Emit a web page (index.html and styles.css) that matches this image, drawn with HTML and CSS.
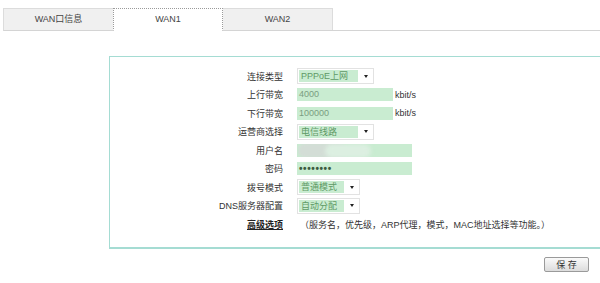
FILE: index.html
```html
<!DOCTYPE html>
<html>
<head>
  <title>WAN设置</title>
  <link rel="stylesheet" href="styles.css">
</head>
<body>
  <div class="page">
    <div class="tabs">
      <div class="tab">WAN口信息</div>
      <div class="tab active">WAN1</div>
      <div class="tab">WAN2</div>
      <div class="tab-line"></div>
    </div>

    <div class="panel">
      <div class="form">
        <div class="label">连接类型</div>
        <div class="field">
          <div class="select wide"><span class="sel-text">PPPoE上网</span><span class="arrow"></span></div>
        </div>

        <div class="label">上行带宽</div>
        <div class="field">
          <div class="input">4000</div><span class="unit">kbit/s</span>
        </div>

        <div class="label">下行带宽</div>
        <div class="field">
          <div class="input">100000</div><span class="unit">kbit/s</span>
        </div>

        <div class="label">运营商选择</div>
        <div class="field">
          <div class="select wide"><span class="sel-text">电信线路</span><span class="arrow"></span></div>
        </div>

        <div class="label">用户名</div>
        <div class="field">
          <div class="input long"><span class="blur-1"></span><span class="blur-2"></span></div>
        </div>

        <div class="label">密码</div>
        <div class="field">
          <div class="input long password">&bull;&bull;&bull;&bull;&bull;&bull;&bull;&bull;</div>
        </div>

        <div class="label">拨号模式</div>
        <div class="field">
          <div class="select"><span class="sel-text">普通模式</span><span class="arrow"></span></div>
        </div>

        <div class="label">DNS服务器配置</div>
        <div class="field">
          <div class="select"><span class="sel-text">自动分配</span><span class="arrow"></span></div>
        </div>

        <div class="label"><a class="adv-link" href="#">高级选项</a></div>
        <div class="field">
          <span class="adv-desc">（服务名，优先级，ARP代理，模式，MAC地址选择等功能。）</span>
        </div>
      </div>
    </div>

    <div class="actions">
      <button class="btn-save">保 存</button>
    </div>
  </div>
</body>
</html>
```

FILE: styles.css
```css
body {
  margin: 0;
  font-family: "Liberation Sans", "Noto Sans CJK SC", sans-serif;
  font-size: 9px;
  color: #333;
  background: #fff;
}

.page {
  width: 600px;
  height: 283px;
  overflow: hidden;
}

.tabs {
  display: flex;
  padding: 8px 0 0 3px;
}

.tab {
  width: 109px;
  height: 21px;
  line-height: 21px;
  text-align: center;
  background: #f0f0f0;
  border: 1px solid #dcdcdc;
  border-bottom: 1px solid #d4d4d4;
  box-sizing: content-box;
  margin-right: -1px;
  color: #444;
}

.tab.active {
  width: 108px;
  background: #fff;
  border: 1px dotted #9a9a9a;
  border-bottom: 1px solid #fff;
  position: relative;
  z-index: 1;
}

.tab-line {
  flex: 1;
  border-bottom: 1px solid #d4d4d4;
}

.panel {
  margin: 25px 0 0 109px;
  width: 520px;
  border: 1px solid #a5dcd3;
  border-bottom: 2px solid #a5dcd3;
  padding: 10px 0 13px;
}

.form {
  display: grid;
  grid-template-columns: 173px auto;
  grid-auto-rows: 18.5px;
  column-gap: 14px;
  align-items: center;
}

.label {
  text-align: right;
  color: #333;
}

.field {
  display: flex;
  align-items: center;
}

.select {
  display: flex;
  align-items: center;
  width: 59px;
  height: 14px;
  border: 1px solid #e2e2e2;
  padding: 0 1px;
}

.select.wide {
  width: 73px;
}

.sel-text {
  flex: 1;
  height: 12px;
  line-height: 12px;
  background: #c9ecd1;
  color: #5f9a66;
  padding-left: 2px;
  margin-right: 6px;
}

.arrow {
  width: 0;
  height: 0;
  border-left: 2.5px solid transparent;
  border-right: 2.5px solid transparent;
  border-top: 3px solid #222;
  margin-right: 4px;
}

.input {
  width: 94px;
  height: 13px;
  line-height: 13px;
  background: #c9ecd1;
  color: #7a9c80;
  padding-left: 2px;
  position: relative;
  overflow: hidden;
}

.input.long {
  width: 113px;
}

.input.password {
  color: #3b5a40;
  font-size: 10px;
  font-weight: bold;
  letter-spacing: 0.6px;
}

.blur-1 {
  position: absolute;
  left: 1px;
  top: -1px;
  width: 48px;
  height: 15px;
  background: #d3ddd6;
  border-radius: 7px;
  filter: blur(1.5px);
}

.blur-2 {
  position: absolute;
  left: 28px;
  top: 0;
  width: 46px;
  height: 14px;
  background: #dcefe1;
  border-radius: 7px;
  filter: blur(2px);
}

.unit {
  margin-left: 2px;
  color: #333;
}

.adv-link {
  color: #222;
  font-weight: bold;
  text-decoration: underline;
}

.adv-desc {
  margin-left: 3px;
  color: #333;
}

.actions {
  width: 589px;
  display: flex;
  justify-content: flex-end;
  margin-top: 8px;
}

.btn-save {
  width: 45px;
  height: 15px;
  padding: 0;
  font-family: "Liberation Sans", "Noto Sans CJK SC", sans-serif;
  font-size: 9px;
  color: #333;
  border: 1px solid #9a9a9a;
  border-radius: 2px;
  background: linear-gradient(#fafafa, #dcdcdc);
}
```
